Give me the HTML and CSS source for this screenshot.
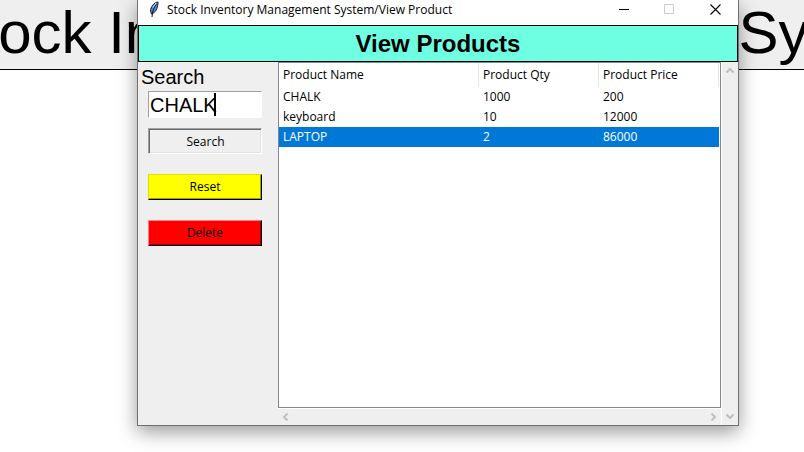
FILE: index.html
```html
<!DOCTYPE html>
<html lang="en">
<head>
<meta charset="utf-8">
<title>Stock Inventory Management System/View Product</title>
<link rel="stylesheet" href="styles.css">
</head>
<body>
<header class="backdrop"><h1 class="backdrop-title">Stock Inventory Management System</h1></header>
<main class="window">
  <div class="titlebar">
    <svg class="feather" width="10" height="16" viewBox="0 0 10 16" aria-hidden="true">
      <path d="M9 1C5 1.500 1.500 6 1.500 10l1 3 2-1C7.500 10 9 6 9 1z" fill="#4d8fd6" stroke="#151b26"/>
      <path d="M7.500 3C4.500 7 3.500 10 3 16" fill="none" stroke="#111"/>
      <path d="M7 2L4 6.500" stroke="#c5ddf5"/>
    </svg>
    <span class="title">Stock Inventory Management System/View Product</span>
    <div class="controls">
      <button class="control" aria-label="Minimize"><svg width="11" height="11" viewBox="0 0 11 11"><path d="M1 5.500h10" stroke="#000"/></svg></button>
      <button class="control" aria-label="Maximize" disabled><svg width="11" height="11" viewBox="0 0 11 11"><path d="M.5.5h9v9h-9z" fill="none" stroke="#ccc"/></svg></button>
      <button class="control" aria-label="Close"><svg width="11" height="11" viewBox="0 0 11 11"><path d="M.5 .5l10 10M10.500 .5l-10 10" stroke="#000" stroke-width="1.1"/></svg></button>
    </div>
  </div>
  <h2 class="banner">View Products</h2>
  <div class="content">
    <form class="sidebar">
      <label class="search-label" for="query">Search</label>
      <div class="entry"><input class="entry-input" id="query" type="text" value="CHALK"><span class="caret"></span></div>
      <button class="btn pressed" type="button">Search</button>
      <button class="btn reset" type="button">Reset</button>
      <button class="btn delete" type="button">Delete</button>
    </form>
    <section class="viewer">
      <div class="tree">
        <table class="products">
          <colgroup><col class="col-name"><col class="col-qty"><col class="col-price"></colgroup>
          <thead><tr><th>Product Name</th><th>Product Qty</th><th>Product Price</th></tr></thead>
          <tbody>
            <tr><td>CHALK</td><td>1000</td><td>200</td></tr>
            <tr><td>keyboard</td><td>10</td><td>12000</td></tr>
            <tr class="selected"><td>LAPTOP</td><td>2</td><td>86000</td></tr>
          </tbody>
        </table>
      </div>
      <div class="scroll vertical">
        <svg width="8" height="7" viewBox="0 0 8 7"><path d="M.5 5.500L4 2l3.500 3.500" class="arrow"/></svg>
        <svg width="8" height="7" viewBox="0 0 8 7"><path d="M.5 1.500L4 5l3.500-3.500" class="arrow"/></svg>
      </div>
      <div class="scroll horizontal">
        <svg width="7" height="8" viewBox="0 0 7 8"><path d="M5.500.5L2 4l3.500 3.500" class="arrow"/></svg>
        <svg width="7" height="8" viewBox="0 0 7 8"><path d="M1.500.5L5 4 1.500 7.500" class="arrow"/></svg>
      </div>
    </section>
  </div>
</main>
</body>
</html>
```
FILE: styles.css
```css
* { box-sizing: border-box; }
body {
  margin: 0;
  min-height: 100vh;
  overflow: hidden;
  background: #fff;
  color: #000;
  font: 12px/20px "Open Sans", sans-serif;
}
.backdrop {
  display: flex;
  justify-content: center;
  height: 70px;
  padding-left: 76px;
  overflow: hidden;
  background: #efefef;
  border-bottom: 1px solid #000;
}
.backdrop-title {
  margin: 0;
  font: 60px/66px "Liberation Sans", sans-serif;
  white-space: nowrap;
}
.window {
  position: absolute;
  top: 0;
  bottom: 26px;
  left: 137px;
  right: 65px;
  display: flex;
  flex-direction: column;
  border: 1px solid #707070;
  border-top: 0;
  background: #efefef;
  box-shadow: 0 6px 18px rgba(0, 0, 0, .4);
}
.titlebar {
  display: flex;
  align-items: flex-start;
  height: 25px;
  padding-left: 11px;
  background: #fff;
}
.feather { margin-top: 1px; }
.title { margin-left: 8px; white-space: nowrap; }
.controls { display: flex; margin-left: auto; }
.control {
  display: flex;
  align-items: center;
  justify-content: center;
  width: 46px;
  height: 18px;
  padding: 0;
  border: 0;
  background: none;
}
.banner {
  margin: 0;
  height: 37px;
  border: 1px solid #000;
  background: #6effe2;
  font: bold 24px/35px "Liberation Sans", sans-serif;
  text-align: center;
}
.content { flex: 1; display: flex; }
.sidebar {
  width: 140px;
  display: flex;
  flex-direction: column;
  padding: 3px 16px 0 10px;
}
.search-label {
  margin-left: -7px;
  font: 20px/24px "Liberation Sans", sans-serif;
}
.entry { position: relative; margin-top: 2px; }
.entry-input {
  display: block;
  width: 100%;
  height: 27px;
  padding: 1px 1px 0;
  border: 1px solid #fff;
  border-top-color: #a0a0a0;
  border-left-color: #a0a0a0;
  background: #fff;
  font: 20px "Liberation Sans", sans-serif;
}
.caret {
  position: absolute;
  top: 2px;
  left: 66px;
  width: 2px;
  height: 23px;
  background: #000;
}
.btn {
  height: 26px;
  margin-top: 20px;
  padding: 0;
  border: 1px solid #000;
  font: inherit;
  color: #000;
}
.pressed {
  margin-top: 10px;
  padding: 2px 0 0 1px;
  background: #efefef;
  border-color: #a0a0a0 #fff #fff #a0a0a0;
  box-shadow: inset 1px 1px #696969, inset -1px -1px #e3e3e3;
}
.reset {
  background: #ff0;
  border-top-color: #dede00;
  border-left-color: #dede00;
  box-shadow: inset -1px -1px #a0a000;
}
.delete {
  background: #f00;
  border-top-color: #ff8080;
  border-left-color: #ff8080;
  box-shadow: inset -1px -1px #a00000;
}
.viewer {
  flex: 1;
  display: grid;
  grid-template-columns: 1fr 17px;
  grid-template-rows: 1fr 17px;
}
.tree { padding-right: 1px; border: 1px solid #828790; background: #fff; }
.products {
  width: 100%;
  table-layout: fixed;
  border-collapse: separate;
  border-spacing: 0;
}
.col-name { width: 200px; }
.col-qty { width: 120px; }
th, td {
  height: 20px;
  padding: 0 4px;
  font-weight: normal;
  text-align: left;
}
th { height: 24px; border-right: 1px solid #e5e5e5; }
.selected { background: #0078d7; color: #fff; }
.scroll {
  display: flex;
  justify-content: space-between;
  align-items: center;
}
.vertical {
  grid-row: 1 / 3;
  grid-column: 2;
  flex-direction: column;
  padding: 5px 0;
  border-left: 1px solid #fff;
}
.horizontal { padding: 0 4px; border-top: 1px solid #fff; }
.arrow { fill: none; stroke: #bfbfbf; stroke-width: 2; }
```
